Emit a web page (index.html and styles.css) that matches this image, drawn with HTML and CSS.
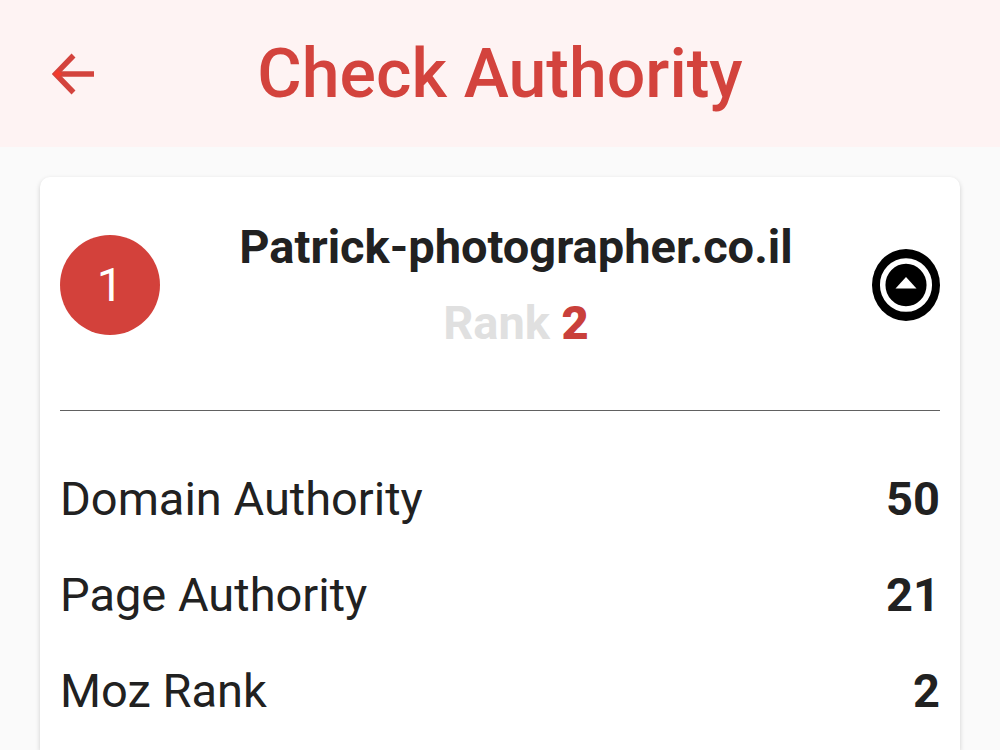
FILE: index.html
```html
<!DOCTYPE html>
<html lang="en">
<head>
<meta charset="utf-8">
<meta name="viewport" content="width=device-width, initial-scale=1">
<title>Check Authority</title>
<link rel="stylesheet" href="styles.css">
</head>
<body>
<header class="app-bar">
  <button class="icon-button" type="button" aria-label="Back">
    <svg width="42" height="42" viewBox="0 0 42 42" aria-hidden="true"><path d="M21.500 2.500 3.500 21 21.500 39.500" fill="none" stroke="currentColor" stroke-width="5.500"/><path d="M3 21H42" stroke="currentColor" stroke-width="5.500"/><path d="M1.500 21 6 16.500 10 21 6 25.500Z" fill="#f23a2c"/></svg>
  </button>
  <h1 class="title">Check Authority</h1>
</header>
<main class="content">
  <article class="card">
    <div class="card-head">
      <span class="badge">1</span>
      <div class="site">
        <h2 class="domain">Patrick-photographer.co.il</h2>
        <p class="rank">Rank <strong class="rank-value">2</strong></p>
      </div>
      <button class="icon-button" type="button" aria-label="Collapse details" aria-expanded="true">
        <svg width="68" height="72" viewBox="0 0 68 72" aria-hidden="true"><ellipse cx="34" cy="36" rx="34" ry="36"/><ellipse cx="34" cy="36" rx="23.300" ry="24" fill="none" stroke="#fff" stroke-width="5.500"/><path d="M23.500 39.500 34 28 44.500 39.500Z" fill="#fff"/></svg>
      </button>
    </div>
    <dl class="metrics">
      <div class="metric"><dt>Domain Authority</dt><dd>50</dd></div>
      <div class="metric"><dt>Page Authority</dt><dd>21</dd></div>
      <div class="metric"><dt>Moz Rank</dt><dd>2</dd></div>
    </dl>
  </article>
</main>
</body>
</html>
```
FILE: styles.css
```css
* { box-sizing: border-box; margin: 0; }
body {
  min-height: 100vh;
  display: flex;
  flex-direction: column;
  background: #fafafa;
  color: #212121;
  font-family: Roboto, sans-serif;
  font-size: 47px;
  line-height: 56px;
}
.app-bar {
  display: grid;
  grid-template-columns: 42px 1fr 42px;
  align-items: center;
  padding: 34px 52px 33px;
  background: #fef3f3;
  color: #d3433d;
}
.icon-button {
  display: flex;
  padding: 0;
  border: 0;
  background: none;
  color: inherit;
  cursor: pointer;
}
.title {
  text-align: center;
  font-size: 68px;
  line-height: 80px;
  font-weight: 500;
}
.content {
  flex: 1;
  display: flex;
  flex-direction: column;
  padding: 30px 40px 0;
}
.card {
  flex: 1;
  padding: 0 20px;
  background: #fff;
  border-radius: 10px 10px 0 0;
  box-shadow: 0 2px 5px rgba(0, 0, 0, 0.18);
}
.card-head {
  display: grid;
  grid-template-columns: 100px 1fr 68px;
  align-items: center;
  padding: 42px 0 59px;
  border-bottom: 1px solid #616161;
}
.badge {
  height: 100px;
  border-radius: 50%;
  background: #d3413b;
  color: #fff;
  line-height: 100px;
  text-align: center;
}
.site {
  display: grid;
  gap: 20px;
  text-align: center;
}
.domain {
  font-size: 47px;
  font-weight: 700;
}
.rank {
  color: #e0e0e0;
  font-weight: 700;
}
.rank-value { color: #c9403b; }
.metrics {
  display: grid;
  gap: 40px;
  padding: 60px 0 20px;
}
.metric {
  display: flex;
  justify-content: space-between;
}
.metric dd { font-weight: 700; }
```
